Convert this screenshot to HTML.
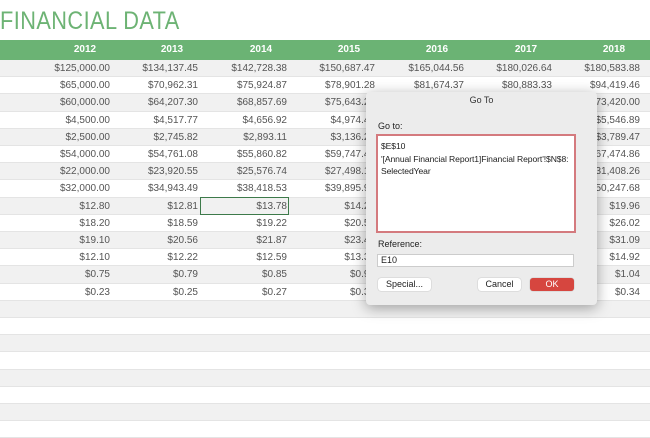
<!DOCTYPE html>
<html><head><style>
body{margin:0;width:650px;height:433px;overflow:hidden;background:#fff;font-family:"Liberation Sans",sans-serif;position:relative}
.t{position:absolute;left:0;top:7px;font-size:25px;color:#6db374;letter-spacing:0.5px;transform:scaleX(0.87);transform-origin:0 0}
.hd{position:absolute;left:0;top:40px;width:650px;height:20px;background:#6bb374}
.hd span{position:absolute;top:4px;font-size:10px;font-weight:bold;color:#fff;width:60px;text-align:center}
.r{position:absolute;left:0;width:650px;height:17.2px;border-bottom:1px solid #e4e4e4;box-sizing:border-box}
.g{background:#f1f1f1}
.r span{position:absolute;top:3px;font-size:10px;color:#555;text-align:right;width:90px}
.sel{position:absolute;left:200px;top:197px;width:89px;height:18px;border:1px solid #3d7a4a;box-sizing:border-box}
.dlg{position:absolute;left:366px;top:92px;width:231px;height:213px;background:#ececec;border-radius:4px;box-shadow:0 3px 14px rgba(0,0,0,.35);font-size:9px;color:#222}
.dlg .tt{position:absolute;top:3px;width:100%;text-align:center;font-size:9px;color:#333}
.ta{position:absolute;left:10px;top:42px;width:200px;height:99px;border:2px solid #d47a7e;background:#fff;box-sizing:border-box;padding:4px 3px;line-height:12.5px;font-size:8.6px;white-space:nowrap;overflow:hidden;letter-spacing:-0.1px}
.in{position:absolute;left:11px;top:162px;width:197px;height:13px;background:#fff;border:1px solid #ccc;box-sizing:border-box;padding-left:3px;line-height:11px}
.b{position:absolute;top:186px;height:13px;background:#fff;border-radius:3px;text-align:center;line-height:13px;box-shadow:0 0 1px rgba(0,0,0,.4)}
</style></head><body>
<div class="t">FINANCIAL DATA</div>
<div class="hd"><span style="left:55px">2012</span><span style="left:142px">2013</span><span style="left:231px">2014</span><span style="left:319px">2015</span><span style="left:407px">2016</span><span style="left:496px">2017</span><span style="left:584px">2018</span></div>
<div id="rows"></div>
<script>
var d=[
["$125,000.00","$134,137.45","$142,728.38","$150,687.47","$165,044.56","$180,026.64","$180,583.88"],
["$65,000.00","$70,962.31","$75,924.87","$78,901.28","$81,674.37","$80,883.33","$94,419.46"],
["$60,000.00","$64,207.30","$68,857.69","$75,643.28","","","$73,420.00"],
["$4,500.00","$4,517.77","$4,656.92","$4,974.43","","","$5,546.89"],
["$2,500.00","$2,745.82","$2,893.11","$3,136.25","","","$3,789.47"],
["$54,000.00","$54,761.08","$55,860.82","$59,747.47","","","$67,474.86"],
["$22,000.00","$23,920.55","$25,576.74","$27,498.18","","","$31,408.26"],
["$32,000.00","$34,943.49","$38,418.53","$39,895.94","","","$50,247.68"],
["$12.80","$12.81","$13.78","$14.20","","","$19.96"],
["$18.20","$18.59","$19.22","$20.50","","","$26.02"],
["$19.10","$20.56","$21.87","$23.40","","","$31.09"],
["$12.10","$12.22","$12.59","$13.30","","","$14.92"],
["$0.75","$0.79","$0.85","$0.90","","","$1.04"],
["$0.23","$0.25","$0.27","$0.30","","","$0.34"]];
var R=[110,198,287,375,464,552,640],h="";
for(var i=0;i<22;i++){var y=60+i*17.2;h+='<div class="r'+(i%2==0?' g':'')+'" style="top:'+y+'px">';
if(d[i])for(var j=0;j<7;j++)h+='<span style="left:'+(R[j]-90)+'px">'+d[i][j]+'</span>';h+='</div>';}
document.getElementById('rows').innerHTML=h;
</script>
<div class="sel"></div>
<div class="dlg">
<div class="tt">Go To</div>
<div style="position:absolute;left:12px;top:29px">Go to:</div>
<div class="ta">$E$10<br>'[Annual Financial Report1]Financial Report'!$N$8:<br>SelectedYear</div>
<div style="position:absolute;left:12px;top:147px">Reference:</div>
<div class="in">E10</div>
<div class="b" style="left:12px;width:53px">Special...</div>
<div class="b" style="left:112px;width:43px">Cancel</div>
<div class="b" style="left:164px;width:44px;background:#d6463f;color:#fff">OK</div>
</div>
</body></html>
